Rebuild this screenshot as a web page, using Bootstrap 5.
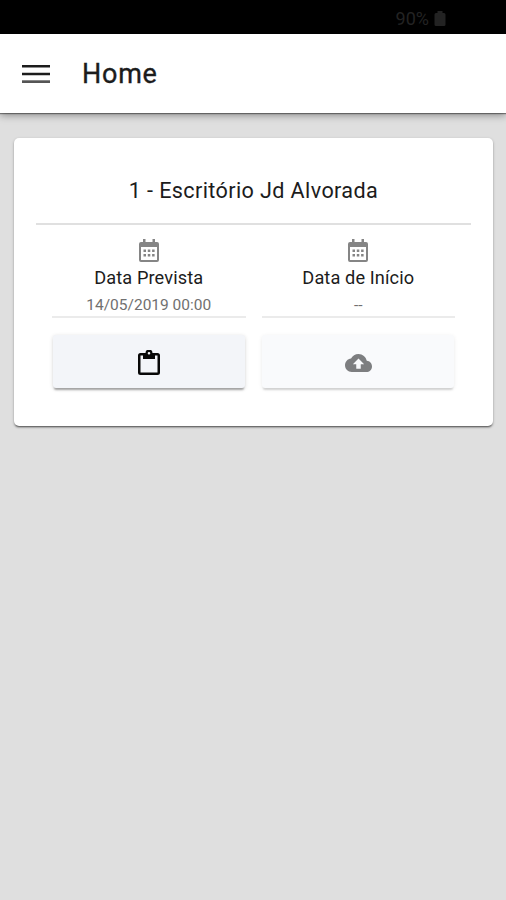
<!DOCTYPE html>
<html lang="pt-BR">
<head>
<meta charset="utf-8">
<meta name="viewport" content="width=device-width, initial-scale=1">
<title>Home</title>
<link href="https://cdn.jsdelivr.net/npm/bootstrap@5.3.0/dist/css/bootstrap.min.css" rel="stylesheet">
<style>
body { font-family: Roboto, "Liberation Sans", sans-serif; background: #dfdfdf; color: #1c1c1c; min-height: 900px; }
svg { display: block; flex: none; }
.status-bar { height: 34px; background: #000; color: #232323; font-size: 18px; line-height: 1; padding: 10px 59px 0 0; }
.status-bar svg { margin-top: -3px; }
.app-bar { height: 79px; background: #fff; padding: 0 21px; gap: 32px; box-shadow: 0 1px 1px rgba(0,0,0,.4), 0 2px 8px rgba(0,0,0,.4); }
.app-title { font-size: 27px; font-weight: 400; line-height: 32px; letter-spacing: .75px; -webkit-text-stroke: .35px #1c1c1c; }
.task-card { margin: 25px 13px 0 14px; height: 288px; border-radius: 5px; padding: 0 22px; box-shadow: 0 2px 2px -1px rgba(0,0,0,.55), 0 1px 3px rgba(0,0,0,.25); }
.task-title { height: 87px; padding-top: 38px; font-size: 21.6px; line-height: 30px; letter-spacing: .38px; border-bottom: 2px solid #e0e0e0; }
.task-columns { padding: 0 8px; }
.task-col { padding: 14px 8px 0; }
.date-box { height: 79px; border-bottom: 2px solid #ebebeb; }
.date-label { font-size: 18.2px; line-height: 24px; margin-top: 3px; letter-spacing: .1px; }
.date-value { font-size: 15.5px; line-height: 20px; margin-top: 5px; color: #707070; }
.task-btn { height: 53px; width: 192px; margin: 17px auto 0; border: 0; border-radius: 3px; background: #f3f5f9; box-shadow: 0 3px 2px -1px rgba(0,0,0,.3), 0 1px 4px rgba(0,0,0,.15); }
.task-btn svg { margin-top: 2px; }
.task-btn:disabled { opacity: 1; background: #f9fafc; box-shadow: 0 3px 2px -1px rgba(0,0,0,.14), 0 1px 4px rgba(0,0,0,.08); }
</style>
</head>
<body>
<div class="status-bar d-flex justify-content-end gap-1">
  <span class="battery-text">90%</span>
  <svg width="14" height="20" viewBox="0 0 14 20" fill="#232323"><path d="M4.500 4h5v2H11q1.500 0 1.500 1.500v10q0 1.500-1.500 1.500H3q-1.500 0-1.500-1.500v-10Q1.500 6 3 6h1.500z"/></svg>
</div>
<header class="app-bar d-flex align-items-center position-relative">
  <svg width="29" height="20" viewBox="0 0 29 20" fill="#1c1c1c"><path d="M1 1h28v2.500H1zM1 8.700h28v2.500H1z"/><path d="M1 16.300h28v2.700H1z" fill="#555"/></svg>
  <h1 class="app-title m-0">Home</h1>
</header>
<main class="task-card bg-white">
  <h2 class="task-title text-center fw-normal m-0">1 - Escritório Jd Alvorada</h2>
  <div class="task-columns row g-0 text-center">
    <div class="task-col col-6">
      <div class="date-box">
        <svg class="mx-auto" width="20" height="24" viewBox="0 0 20 24"><path d="M4 0h2.500v4H4zM13.500 0H16v4h-2.500z" fill="#858585"/><path fill="#858585" fill-rule="evenodd" d="M2 3h16q2 0 2 2v16q0 2-2 2H2q-2 0-2-2V5q0-2 2-2zm0 5v13h16V8z"/><path fill="#858585" d="M4.500 10.500H7v2.500H4.500zm4.300 0h2.500v2.500H8.800zm4.300 0h2.500v2.500h-2.500zM4.500 15H7v2.500H4.500zm4.300 0h2.500v2.500H8.800zm4.300 0h2.500v2.500h-2.500z"/></svg>
        <div class="date-label">Data Prevista</div>
        <div class="date-value">14/05/2019 00:00</div>
      </div>
      <button type="button" class="task-btn btn d-flex align-items-center justify-content-center" aria-label="Formulário">
        <svg width="22" height="26" viewBox="0 0 22 26" fill="#080808"><path fill-rule="evenodd" d="M2.500 3H7.500a3.500 3.500 0 0 1 7 0h5q2.500 0 2.500 2.500v17q0 2.500-2.500 2.500h-17Q0 25 0 22.500v-17Q0 3 2.500 3zM11 2a1.300 1.300 0 1 0 0 2.600A1.300 1.300 0 0 0 11 2zM2.500 5.500v17h17v-17H17V9H5V5.500z"/></svg>
      </button>
    </div>
    <div class="task-col col-6">
      <div class="date-box">
        <svg class="mx-auto" width="20" height="24" viewBox="0 0 20 24"><path d="M4 0h2.500v4H4zM13.500 0H16v4h-2.500z" fill="#858585"/><path fill="#858585" fill-rule="evenodd" d="M2 3h16q2 0 2 2v16q0 2-2 2H2q-2 0-2-2V5q0-2 2-2zm0 5v13h16V8z"/><path fill="#858585" d="M4.500 10.500H7v2.500H4.500zm4.300 0h2.500v2.500H8.800zm4.300 0h2.500v2.500h-2.500zM4.500 15H7v2.500H4.500zm4.300 0h2.500v2.500H8.800zm4.300 0h2.500v2.500h-2.500z"/></svg>
        <div class="date-label">Data de Início</div>
        <div class="date-value">--</div>
      </div>
      <button type="button" class="task-btn btn d-flex align-items-center justify-content-center" disabled aria-label="Enviar">
        <svg width="27" height="18" viewBox="0 4 24 16" preserveAspectRatio="none" fill="#7d7e80"><path d="M19.350 10.040C18.670 6.590 15.640 4 12 4 9.110 4 6.600 5.640 5.350 8.040 2.340 8.360 0 10.910 0 14c0 3.310 2.690 6 6 6h13c2.760 0 5-2.240 5-5 0-2.640-2.050-4.780-4.650-4.960zM14 13v4h-4v-4H7l5-5 5 5h-3z"/></svg>
      </button>
    </div>
  </div>
</main>
<script src="https://cdn.jsdelivr.net/npm/bootstrap@5.3.0/dist/js/bootstrap.bundle.min.js"></script>
</body>
</html>
